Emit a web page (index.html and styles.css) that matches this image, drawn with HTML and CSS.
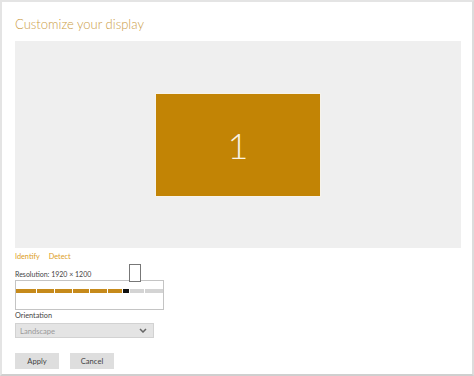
FILE: index.html
```html
<!DOCTYPE html>
<html>
  <head>
    <meta charset="UTF-8">
    <title>Customize your display</title>
    <link rel="stylesheet" href="styles.css">
  </head>
  <body>
    <div class="frame">
      <h1 class="title">Customize your display</h1>

      <div class="preview">
        <div class="monitor">1</div>
      </div>

      <div class="links">
        <a class="link" href="#">Identify</a>
        <a class="link" href="#">Detect</a>
      </div>

      <div class="label res-label">Resolution: 1920 × 1200</div>
      <div class="slider">
        <div class="thumb"></div>
        <div class="track">
          <span class="seg on s1"></span>
          <span class="seg on s2"></span>
          <span class="seg on s2"></span>
          <span class="seg on s2"></span>
          <span class="seg on s2"></span>
          <span class="seg on s3"></span>
          <span class="seg knob"></span>
          <span class="seg off s4"></span>
          <span class="seg off s5"></span>
        </div>
      </div>

      <div class="label orient-label">Orientation</div>
      <div class="select">
        <span>Landscape</span>
        <svg class="chevron" width="8" height="5" viewBox="0 0 8 5">
          <path d="M1 1 L4 4 L7 1" fill="none" stroke="#666" stroke-width="1.5"/>
        </svg>
      </div>

      <div class="buttons">
        <button class="btn">Apply</button>
        <button class="btn">Cancel</button>
      </div>
    </div>
  </body>
</html>
```

FILE: styles.css
```css
body {
  margin: 0;
  overflow: hidden;
  font-family: Lato, "Open Sans", sans-serif;
}

.frame {
  box-sizing: border-box;
  width: 474px;
  height: 376px;
  background: #fff;
  border: 2px solid #e4e4e4;
  border-bottom-color: #cfcfcf;
  border-right-color: #dcdcdc;
  padding: 0 11px 0 13px;
}

.title {
  margin: 0;
  padding-top: 14px;
  height: 25px;
  font-size: 13px;
  font-weight: 300;
  line-height: 16px;
  color: #cb9c45;
}

.preview {
  height: 207px;
  background: #efefef;
  display: flex;
  align-items: center;
  justify-content: center;
}

.monitor {
  width: 164px;
  height: 102px;
  margin-top: 1px;
  background: #c28405;
  outline: 1px solid #f7f3ea;
  color: #fbf3e2;
  font-size: 36px;
  font-weight: 300;
  line-height: 102px;
  text-align: center;
}

.links {
  display: flex;
  gap: 9px;
  margin-top: 1px;
  height: 14px;
  align-items: center;
}

.link {
  font-size: 7.3px;
  color: #dc9d1e;
  text-decoration: none;
}

.label {
  font-size: 7.3px;
  color: #444;
}

.res-label {
  margin-top: 6px;
  height: 11px;
  line-height: 11px;
  font-size: 7px;
}

.slider {
  position: relative;
  box-sizing: border-box;
  width: 149px;
  height: 30px;
  border: 1px solid #c4c4c4;
  background: #fff;
  padding-top: 8px;
}

.thumb {
  position: absolute;
  left: 113px;
  top: -17px;
  box-sizing: border-box;
  width: 12px;
  height: 18px;
  border: 1px solid #777;
  background: #fff;
}

.track {
  display: flex;
  gap: 1px;
  height: 4px;
}

.seg {
  display: block;
  height: 4px;
}

.on { background: #c68a1b; }
.off { background: #d4d4d4; }
.knob { width: 6px; background: #111; }
.s1 { width: 20px; }
.s2 { width: 17px; }
.s3 { width: 14px; }
.s4 { width: 14px; }
.s5 { width: 18px; }

.orient-label {
  padding-top: 1px;
  height: 10px;
  line-height: 10px;
}

.select {
  box-sizing: border-box;
  width: 139px;
  height: 15px;
  margin-top: 2px;
  background: #e4e4e4;
  border: 1px solid #d2d2d2;
  display: flex;
  align-items: center;
  justify-content: space-between;
  padding: 0 6px 0 4px;
  font-size: 7.6px;
  color: #9a9a9a;
}

.buttons {
  display: flex;
  gap: 11px;
  margin-top: 15px;
}

.btn {
  width: 44px;
  height: 16px;
  padding: 0;
  border: none;
  background: #dedede;
  color: #444;
  font-family: Lato, "Open Sans", sans-serif;
  font-size: 7.6px;
}
```
